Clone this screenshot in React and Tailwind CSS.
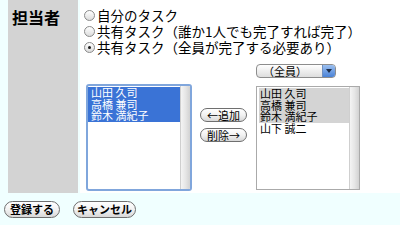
import React from "react";

const jp = { fontFamily: '"Noto Sans CJK JP", "Noto Sans", sans-serif' };

// Round radio like the old aqua one
const Radio = ({ checked }) => (
  <span className="inline-flex items-center justify-center w-[11px] h-[11px] rounded-full border border-[#8a8a8a] bg-gradient-to-b from-white to-[#dcdcdc] mr-[2px] shrink-0">
    {checked && <span className="w-[3px] h-[3px] rounded-full bg-[#1a1a1a]" />}
  </span>
);

const PillButton = ({ children, className = "" }) => (
  <button
    className={`flex items-center justify-center rounded-full border border-[#6f6f6f] bg-gradient-to-b from-white via-[#f2f2f2] to-[#d8d8d8] text-black leading-none ${className}`}
  >
    {children}
  </button>
);

const Scrollbar = () => (
  <div className="w-[10px] bg-gradient-to-r from-[#f4f4f4] via-[#e6e6e6] to-[#d2d2d2] border-l border-[#cfcfcf]" />
);

const leftMembers = ["山田 久司", "高橋 兼司", "鈴木 満紀子"];
const rightMembers = [
  { name: "山田 久司", sel: true },
  { name: "高橋 兼司", sel: true },
  { name: "鈴木 満紀子", sel: true },
  { name: "山下 誠二", sel: false },
];

export default function App() {
  return (
    <div className="w-[400px] h-[225px] bg-[#f0ffff] overflow-hidden" style={jp}>
      {/* form table row */}
      <div className="flex h-[193px] pl-2">
        <div className="w-[70px] bg-[#d3d3d3] pl-[4px] pt-[5px]">
          <span className="text-[16px] font-bold text-black leading-[20px]">担当者</span>
        </div>
        <div className="flex-1 ml-[2px] bg-white pl-[4px] pt-[7px]">
          <div className="text-[13.5px] text-black leading-[16px]">
            <div className="flex items-center">
              <Radio />
              <span>自分のタスク</span>
            </div>
            <div className="flex items-center">
              <Radio />
              <span>共有タスク（誰か1人でも完了すれば完了）</span>
            </div>
            <div className="flex items-center">
              <Radio checked />
              <span>共有タスク（全員が完了する必要あり）</span>
            </div>
          </div>

          <div className="flex items-end mt-[9px]">
            {/* left list: selected members */}
            <div className="ml-[2px] w-[106px] h-[107px] rounded-[3px] border-2 border-[#80a6dc] bg-white flex overflow-hidden">
              <div className="flex-1 pt-[1px]">
                {leftMembers.map((m) => (
                  <div
                    key={m}
                    className="bg-[#3a73d6] text-white text-[11px] leading-[11.5px] pl-[3px] whitespace-pre"
                  >
                    {m}
                  </div>
                ))}
              </div>
              <Scrollbar />
            </div>

            {/* add / remove */}
            <div className="flex flex-col gap-[6px] ml-[8px] mb-[49px]">
              <PillButton className="w-[47px] h-[14px] text-[11px]">←追加</PillButton>
              <PillButton className="w-[47px] h-[14px] text-[11px]">削除→</PillButton>
            </div>

            {/* group select + candidates */}
            <div className="ml-[9px] mb-[1px] flex flex-col">
              <div className="w-[80px] h-[14px] rounded-[4px] border border-[#8d8d8d] bg-gradient-to-b from-white to-[#dedede] flex items-stretch overflow-hidden">
                <span className="flex-1 flex items-center text-[11px] leading-[12px] pl-[6px] text-black">（全員）</span>
                <span className="w-[13px] bg-gradient-to-b from-[#9cc0f0] to-[#4a82d6] border-l border-[#6e8fc0] flex items-center justify-center">
                  <svg width="6" height="4" viewBox="0 0 6 4">
                    <path d="M0 0h6L3 4z" fill="#1b2c48" />
                  </svg>
                </span>
              </div>
              <div className="mt-[8px] w-[104px] h-[104px] border border-[#aaaaaa] bg-white flex">
                <div className="flex-1 pt-[1px] pl-[2px]">
                  {rightMembers.map((m) => (
                    <div
                      key={m.name}
                      className={`text-[11px] leading-[11.5px] pl-[1px] text-black whitespace-pre ${
                        m.sel ? "bg-[#d4d4d4]" : ""
                      }`}
                    >
                      {m.name}
                    </div>
                  ))}
                </div>
                <Scrollbar />
              </div>
            </div>
          </div>
        </div>
      </div>

      {/* submit row */}
      <div className="flex gap-[13px] pl-[4px] mt-[8px]">
        <PillButton className="w-[56px] h-[17px] text-[11px] font-bold">登録する</PillButton>
        <PillButton className="w-[63px] h-[17px] text-[11px] font-bold">キャンセル</PillButton>
      </div>
    </div>
  );
}
